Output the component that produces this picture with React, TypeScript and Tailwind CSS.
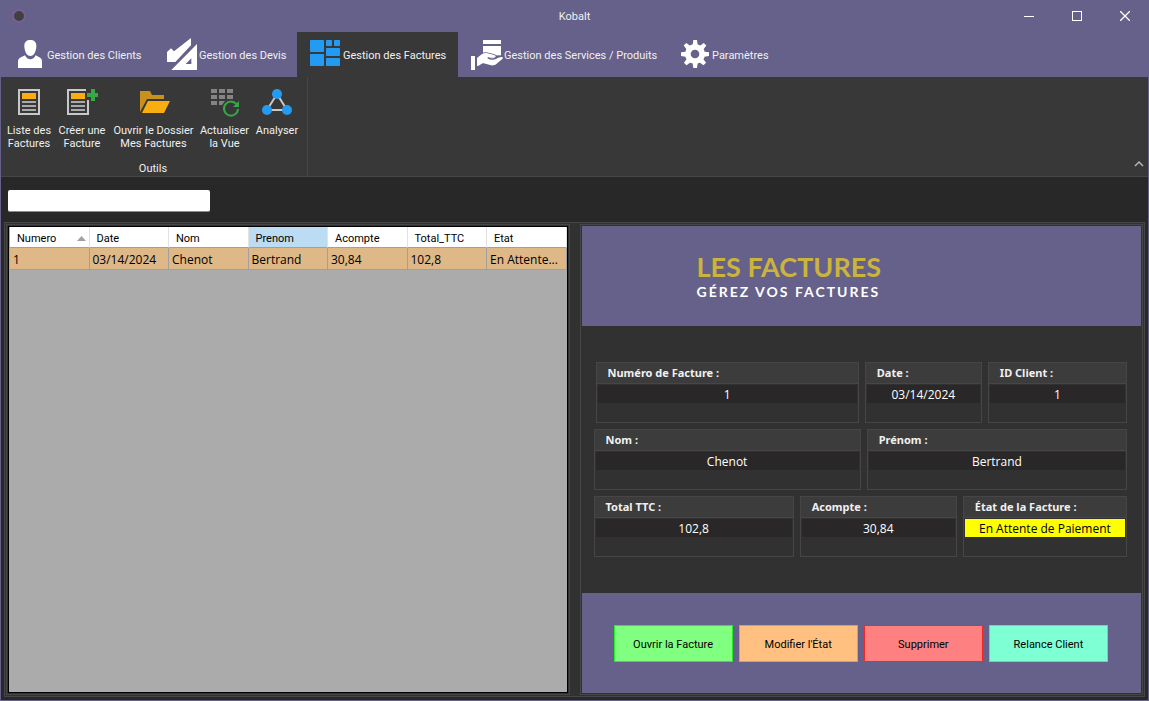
import { useState } from 'react';
import type { ReactNode } from 'react';

interface Tab {
  id: string;
  label: string;
  width: string;
  icon: ReactNode;
}

interface Facture {
  numero: string;
  date: string;
  nom: string;
  prenom: string;
  acompte: string;
  total: string;
  etat: string;
}

const factures: Facture[] = [
  {
    numero: '1',
    date: '03/14/2024',
    nom: 'Chenot',
    prenom: 'Bertrand',
    acompte: '30,84',
    total: '102,8',
    etat: 'En Attente de Paiement',
  },
];

const columns: { key: keyof Facture; label: string }[] = [
  { key: 'numero', label: 'Numero' },
  { key: 'date', label: 'Date' },
  { key: 'nom', label: 'Nom' },
  { key: 'prenom', label: 'Prenom' },
  { key: 'acompte', label: 'Acompte' },
  { key: 'total', label: 'Total_TTC' },
  { key: 'etat', label: 'Etat' },
];

// the grid cells only have room for the start of a long status
const shorten = (text: string) => (text.length > 10 ? `${text.slice(0, 10)}...` : text);

const tabIconClass = 'w-[30px] h-8 shrink-0 overflow-visible';

const ClientIcon = () => (
  <svg className={tabIconClass} viewBox="0 0 90 96" fill="#fff">
    <path d="M49 6c-11 0-18 6-18 17 0 16 7 31 18 31s18-15 18-31c0-11-7-17-18-17Z" />
    <path d="M12 90V71c0-7 3-10 9-13l12-6c4 8 9 12 16 12s12-4 16-12l11 6c6 3 8 6 8 13v19Z" />
  </svg>
);

const DevisIcon = () => (
  <svg className={tabIconClass} viewBox="0 0 90 96" fill="#fff">
    <path d="M3 42 15 31l9 9L75 0v22L28 72H3Z" />
    <path fillRule="evenodd" d="M93 18v78H16Zm-17 43v17H59Z" />
  </svg>
);

const FactureIcon = () => (
  <svg className={tabIconClass} viewBox="0 0 90 96" fill="#249bf3">
    <rect x="0" y="6" width="42" height="36" rx="2" />
    <rect x="0" y="48" width="42" height="36" rx="2" />
    <rect x="48" y="6" width="18" height="18" rx="2" />
    <rect x="72" y="6" width="18" height="18" rx="2" />
    <rect x="48" y="30" width="42" height="24" rx="2" />
    <rect x="48" y="60" width="42" height="24" rx="2" />
  </svg>
);

const ServiceIcon = () => (
  <svg className={tabIconClass} viewBox="0 0 90 96" fill="#fff">
    <rect x="36" y="6" width="54" height="12" rx="1" />
    <path d="M36 24h54v28H36Z" />
    <path
      d="M18 60 32 49c6-4 12-5 18-3l20 5c6 2 5 8-1 8H54l18 3 18-5c6-1 8 3 3 7L76 78c-5 4-10 5-16 4l-22-6c-8 0-10 8-20 8Z"
      stroke="#66618a"
      strokeWidth="5"
      paintOrder="stroke"
    />
    <path d="M50 59c8 5 18 6 27 1" fill="none" stroke="#66618a" strokeWidth="4" />
    <path d="M0 54h12v42H0Z" />
  </svg>
);

const GearIcon = () => (
  <svg className={tabIconClass} viewBox="0 0 90 96" fill="#fff">
    <path d="M41 20 43 6h11l2 14v56l-2 14H43l-2-14Z" />
    <path d="M41 20 43 6h11l2 14v56l-2 14H43l-2-14Z" transform="rotate(45 48 48)" />
    <path d="M41 20 43 6h11l2 14v56l-2 14H43l-2-14Z" transform="rotate(90 48 48)" />
    <path d="M41 20 43 6h11l2 14v56l-2 14H43l-2-14Z" transform="rotate(135 48 48)" />
    <circle cx="48" cy="48" r="30" />
    <circle cx="48" cy="48" r="13" fill="#66618a" />
  </svg>
);

const ListIcon = () => (
  <svg className="w-8 h-8" viewBox="0 0 32 32">
    <rect x="6" y="4" width="20" height="24" fill="none" stroke="#c8c8c8" strokeWidth="2" />
    <path d="M9 7h14v6H9Z" fill="#f9ad10" />
    <path d="M9 15h14v2H9Zm0 4h14v2H9Zm0 4h14v2H9Z" fill="#a9a9a9" />
  </svg>
);

const CreateIcon = () => (
  <svg className="w-8 h-8" viewBox="0 0 32 32">
    <path d="M20 4H2v24h20V14" fill="none" stroke="#c8c8c8" strokeWidth="2" />
    <path d="M5 7h14v6H5Z" fill="#f9ad10" />
    <path d="M5 15h14v2H5Zm0 4h14v2H5Zm0 4h14v2H5Z" fill="#a9a9a9" />
    <path d="M25 3h4v4h4v4h-4v4h-4v-4h-4V7h4Z" fill="#36a846" />
  </svg>
);

const FolderIcon = () => (
  <svg className="w-8 h-8" viewBox="0 0 32 32">
    <path d="M2 5h10l2 4h12v4H9L2 26Z" fill="#c8901c" />
    <path d="M10 15h22l-6 12H4Z" fill="#f9ad10" />
  </svg>
);

const RefreshIcon = () => (
  <svg className="w-8 h-8 overflow-visible" viewBox="0 0 32 32">
    <path
      d="M2 3h6v4H2Zm8 0h6v4h-6Zm8 0h6v4h-6ZM2 9h6v4H2Zm8 0h6v4h-6Zm8 0h6v4h-6ZM2 15h6v4H2Zm8 0h6l-3 4h-3Z"
      fill="#848484"
    />
    <path d="M28 19a7 7 0 1 0 1 4" fill="none" stroke="#36a846" strokeWidth="2" />
    <path d="M30 15v6h-6Z" fill="#36a846" />
  </svg>
);

const AnalyseIcon = () => (
  <svg className="w-8 h-8" viewBox="0 0 32 32">
    <path d="M16 8 6 24h20Z" fill="none" stroke="#c8c8c8" strokeWidth="2" />
    <circle cx="16" cy="8" r="5" fill="#249bf3" />
    <circle cx="6" cy="24" r="5" fill="#249bf3" />
    <circle cx="26" cy="24" r="5" fill="#249bf3" />
  </svg>
);

const tabs: Tab[] = [
  { id: 'clients', label: 'Gestion des Clients', width: 'w-[152px]', icon: <ClientIcon /> },
  { id: 'devis', label: 'Gestion des Devis', width: 'w-36', icon: <DevisIcon /> },
  { id: 'factures', label: 'Gestion des Factures', width: 'w-[161px]', icon: <FactureIcon /> },
  { id: 'services', label: 'Gestion des Services / Produits', width: 'w-52', icon: <ServiceIcon /> },
  { id: 'parametres', label: 'Paramètres', width: 'w-32', icon: <GearIcon /> },
];

const tools = [
  { lines: ['Liste des', 'Factures'], width: 'w-[50px]', icon: <ListIcon /> },
  { lines: ['Créer une', 'Facture'], width: 'w-14', icon: <CreateIcon /> },
  { lines: ['Ouvrir le Dossier', 'Mes Factures'], width: 'w-[87px]', icon: <FolderIcon /> },
  { lines: ['Actualiser', 'la Vue'], width: 'w-[55px]', icon: <RefreshIcon /> },
  { lines: ['Analyser'], width: 'w-[50px]', icon: <AnalyseIcon /> },
];

const actions = [
  { label: 'Ouvrir la Facture', color: 'bg-[#80ff80] border-[#22f022]' },
  { label: "Modifier l'État", color: 'bg-[#ffc080] border-[#f09a3c]' },
  { label: 'Supprimer', color: 'bg-[#ff8080] border-[#f02828]' },
  { label: 'Relance Client', color: 'bg-[#7fffd4] border-[#34f0b4]' },
];

function TitleBar() {
  return (
    <header className="grid grid-cols-[1fr_auto_1fr] items-center h-8 -mx-px bg-[#66618a]">
      <span className="ml-3 w-[14px] h-[14px] rounded-full bg-[#404040] border-2 border-[#7a5f92]"></span>
      <h1>Kobalt</h1>
      <div className="flex justify-end h-8">
        <button aria-label="Réduire" className="w-12 flex items-center justify-center">
          <svg className="w-[10px] h-[10px]" viewBox="0 0 10 10">
            <path d="M0 5h10v1H0Z" fill="#fff" />
          </svg>
        </button>
        <button aria-label="Agrandir" className="w-12 flex items-center justify-center">
          <span className="w-[10px] h-[10px] border border-white"></span>
        </button>
        <button aria-label="Fermer" className="w-12 flex items-center justify-center">
          <svg className="w-[10px] h-[10px]" viewBox="0 0 10 10">
            <path d="m0 0 10 10M10 0 0 10" stroke="#fff" strokeWidth="1.3" />
          </svg>
        </button>
      </div>
    </header>
  );
}

interface FieldProps {
  id: string;
  label: string;
  value: string;
  highlight?: boolean;
}

function Field({ id, label, value, highlight }: FieldProps) {
  return (
    <div className="border border-[#464646] h-[61px] min-w-0">
      <label
        htmlFor={id}
        className="block h-[21px] pl-[11px] leading-[20px] font-bold text-[11px] bg-[#3c3c3c] border-b border-[#464646] font-['Noto_Sans',sans-serif]"
      >
        {label}
      </label>
      <div className="p-px">
        <input
          id={id}
          readOnly
          value={value}
          className={`block w-full h-[18px] text-center font-['Open_Sans',sans-serif] text-[12px] outline-none ${
            highlight ? 'bg-[#ffff00] text-black' : 'bg-[#2a2728] text-white'
          }`}
        />
      </div>
    </div>
  );
}

export default function App() {
  const [activeTab, setActiveTab] = useState('factures');
  const [search, setSearch] = useState('');
  const facture = factures[0];

  return (
    <div className="min-h-screen flex flex-col bg-[#282828] border border-t-0 border-[#66618a] text-[#f0f0f0] text-[11px] leading-[13px] font-['Roboto',sans-serif]">
      <TitleBar />

      <nav className="flex h-[45px] bg-[#66618a]">
        {tabs.map(tab => (
          <button
            key={tab.id}
            onClick={() => setActiveTab(tab.id)}
            className={`flex items-center gap-[3px] pl-[13px] pb-px whitespace-nowrap ${tab.width} ${
              activeTab === tab.id ? 'bg-[#383838]' : ''
            }`}
          >
            {tab.icon}
            <span className="pt-[2px]">{tab.label}</span>
          </button>
        ))}
      </nav>

      <section className="flex justify-between h-[100px] bg-[#383838] border-b border-[#464646]">
        <div className="flex flex-col justify-between pl-[3px] pr-[5px] pt-[9px] pb-px border-r border-[#464646]">
          <div className="flex items-start">
            {tools.map(tool => (
              <button key={tool.lines[0]} className={`flex flex-col items-center gap-[6px] whitespace-nowrap ${tool.width}`}>
                {tool.icon}
                <span>
                  {tool.lines.map(line => (
                    <span key={line} className="block">{line}</span>
                  ))}
                </span>
              </button>
            ))}
          </div>
          <p className="text-center">Outils</p>
        </div>
        <button aria-label="Réduire le ruban" className="self-end p-1 pb-2">
          <svg className="w-[10px] h-[8px]" viewBox="0 0 10 8">
            <path d="m1 6 4-4 4 4" fill="none" stroke="#b4b4b4" strokeWidth="1.5" />
          </svg>
        </button>
      </section>

      <div className="pl-[7px] pt-[13px] pb-[10px]">
        <input
          type="text"
          aria-label="Rechercher une facture"
          value={search}
          onChange={e => setSearch(e.target.value)}
          className="block w-[202px] h-[22px] px-1 bg-white text-black border-b border-[#8a8a8a] rounded-[2px]"
        />
      </div>

      <main className="flex-1 flex gap-[10px] mx-[3px] mb-[3px] p-px bg-[#313131] border border-[#464646]">
        <section className="flex-1 min-w-0 flex border border-[#464646] p-px">
          <div className="flex-1 min-w-0 pl-px bg-[#ababab] border border-black">
            <table className="w-full table-fixed border-separate border-spacing-0 text-black">
              <thead>
                <tr className="h-[21px]">
                  {columns.map(col => (
                    <th
                      key={col.key}
                      className={`pt-[2px] pb-0 pl-[7px] pr-[3px] text-left font-normal border-r border-b border-r-[#e2e2e2] border-b-[#a0a0a0] ${
                        col.key === 'prenom' ? 'bg-[#bcdcf4]' : 'bg-white'
                      }`}
                    >
                      <span className="flex items-center justify-between">
                        {col.label}
                        {col.key === 'numero' && (
                          <svg className="w-[9px] h-[5px]" viewBox="0 0 9 5">
                            <path d="M0 5 4.500 0 9 5Z" fill="#a0a0a0" />
                          </svg>
                        )}
                      </span>
                    </th>
                  ))}
                </tr>
              </thead>
              <tbody>
                {factures.map(row => (
                  <tr key={row.numero} className="h-[22px] bg-[#deb887]">
                    {columns.map(col => (
                      <td
                        key={col.key}
                        title={row[col.key]}
                        className="pt-[2px] pb-0 pl-[3px] pr-px whitespace-nowrap font-['Open_Sans',sans-serif] text-[12px] border-r border-b border-[#a0a0a0]"
                      >
                        {shorten(row[col.key])}
                      </td>
                    ))}
                  </tr>
                ))}
              </tbody>
            </table>
          </div>
        </section>

        <section className="flex-1 min-w-0 flex flex-col border border-[#464646] p-px">
          <div className="h-[100px] pl-[115px] pt-6 bg-[#66618a]">
            <h2 className="text-[27px] leading-[34px] font-bold text-[#cbb43c] font-['Lato',sans-serif]">LES FACTURES</h2>
            <p className="text-[14px] leading-[16px] font-bold text-white tracking-[2px] font-['Lato',sans-serif]">GÉREZ VOS FACTURES</p>
          </div>

          <div className="flex-1 flex flex-col gap-[6px] pt-9 pb-9 pl-3 pr-[14px]">
            <div className="grid grid-cols-[263fr_117fr_139fr] gap-[6px] pl-[2px]">
              <Field id="numero" label="Numéro de Facture :" value={facture.numero} />
              <Field id="date" label="Date :" value={facture.date} />
              <Field id="client" label="ID Client :" value="1" />
            </div>
            <div className="grid grid-cols-[267fr_260fr] gap-[6px]">
              <Field id="nom" label="Nom :" value={facture.nom} />
              <Field id="prenom" label="Prénom :" value={facture.prenom} />
            </div>
            <div className="grid grid-cols-[200fr_157fr_164fr] gap-[6px]">
              <Field id="total" label="Total TTC :" value={facture.total} />
              <Field id="acompte" label="Acompte :" value={facture.acompte} />
              <Field id="etat" label="État de la Facture :" value={facture.etat} highlight />
            </div>
          </div>

          <div className="h-[100px] grid grid-cols-4 gap-[6px] items-start pl-8 pr-[33px] pt-8 bg-[#66618a]">
            {actions.map(action => (
              <button key={action.label} className={`h-[37px] pt-[2px] text-black border ${action.color}`}>
                {action.label}
              </button>
            ))}
          </div>
        </section>
      </main>
    </div>
  );
}
